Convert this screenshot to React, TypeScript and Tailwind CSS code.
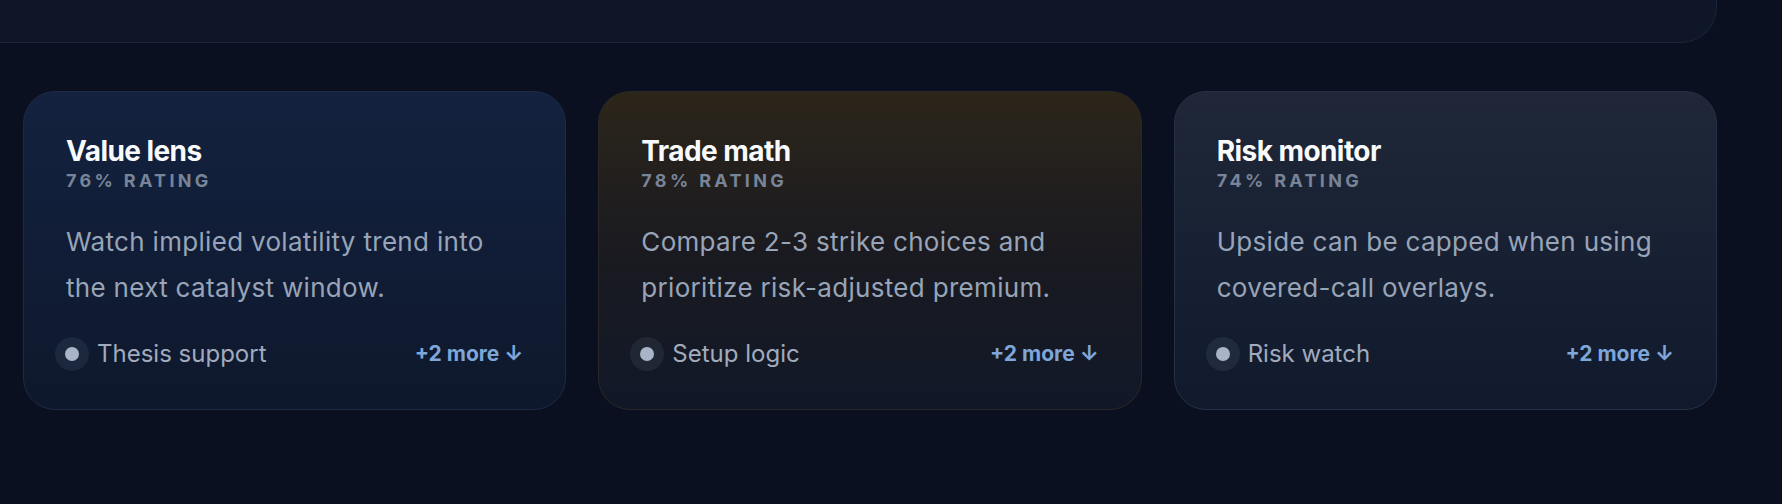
const insights = [
  {
    title: "Value lens",
    rating: 76,
    body: "Watch implied volatility trend into the next catalyst window.",
    tag: "Thesis support",
    extra: 2,
    card: "border-[#1d2a45] bg-linear-to-b from-[#14223f] via-[#111d36] to-[#0e182c]",
  },
  {
    title: "Trade math",
    rating: 78,
    body: "Compare 2-3 strike choices and prioritize risk-adjusted premium.",
    tag: "Setup logic",
    extra: 2,
    card: "border-[#2a2824] bg-linear-to-b from-[#2c2519] via-[#1a1a20] to-[#101828]",
  },
  {
    title: "Risk monitor",
    rating: 74,
    body: "Upside can be capped when using covered-call overlays.",
    tag: "Risk watch",
    extra: 2,
    card: "border-[#263145] bg-linear-to-b from-[#1f2738] via-[#182133] to-[#111a2c]",
  },
];

type Insight = (typeof insights)[number];

function InsightCard({ item }: { item: Insight }) {
  return (
    <div className={`flex h-[319px] flex-col rounded-[32px] border px-[42px] pt-[42px] ${item.card}`}>
      <h3 className="text-[28px] font-bold leading-[35px] tracking-[-0.02em] text-[#f8fafc]">
        {item.title}
      </h3>
      <p className="text-[18px] font-bold leading-[24px] tracking-[0.185em] text-[#788498]">
        {item.rating}% RATING
      </p>
      <p className="mt-[26px] max-w-[445px] text-[26px] leading-[46px] tracking-[0.012em] text-[#98a4b7]">
        {item.body}
      </p>
      <div className="mt-[26px] -ml-[11px] flex items-center justify-between">
        <div className="flex items-center gap-[8px]">
          <span className="flex h-[34px] w-[34px] items-center justify-center rounded-full bg-[#94a3b8]/10">
            <span className="h-[14px] w-[14px] rounded-full bg-[#a9b4c8]" />
          </span>
          <span className="text-[24px] leading-[28px] text-[#a1abbd]">{item.tag}</span>
        </div>
        <button type="button" className="text-[21px] font-bold leading-[28px] text-[#7ea6d8]">
          +{item.extra} more ↓
        </button>
      </div>
    </div>
  );
}

export default function App() {
  return (
    <div
      className="h-[504px] w-full overflow-hidden bg-[#0a1020]"
      style={{ fontFamily: "Inter, 'Noto Sans', sans-serif" }}
    >
      {/* tail of the panel above */}
      <div className="h-[43px] w-[1717px] rounded-br-[36px] border-r border-b border-[#1b2539] bg-[#0e1628]" />
      <div className="grid w-[1717px] grid-cols-3 gap-8 pt-[48px] pl-[23px]">
        {insights.map((item) => (
          <InsightCard key={item.title} item={item} />
        ))}
      </div>
    </div>
  );
}
